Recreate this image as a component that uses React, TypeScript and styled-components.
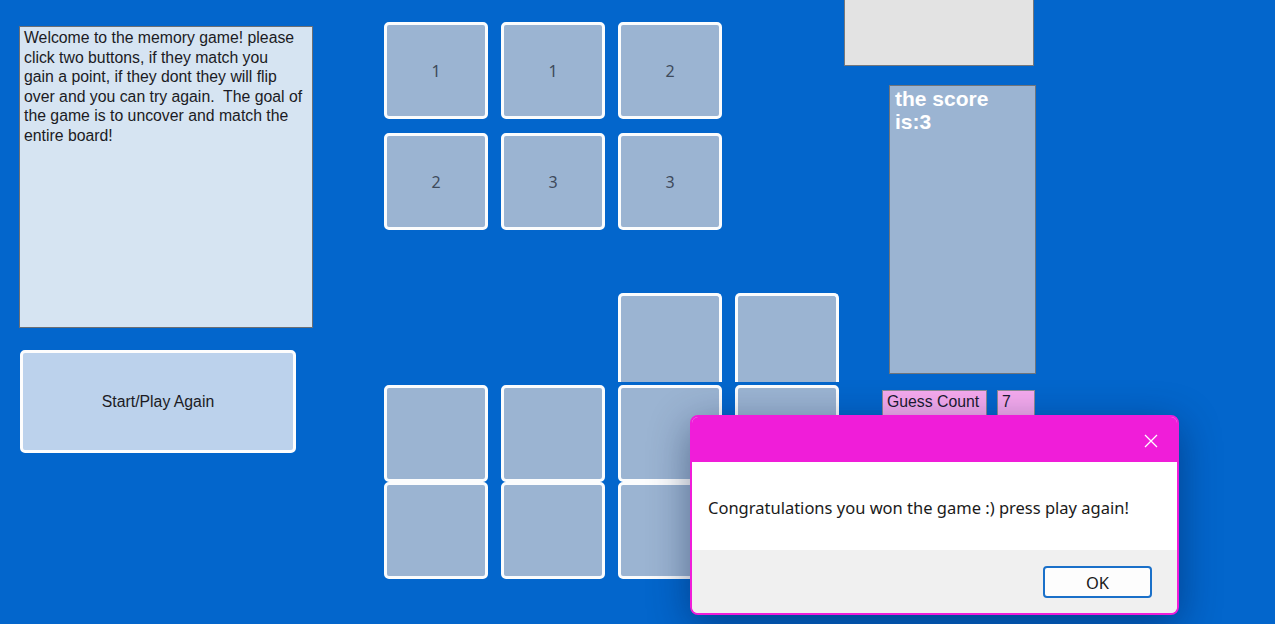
import styled, { createGlobalStyle } from "styled-components";

const GlobalStyle = createGlobalStyle`
  html, body {
    margin: 0;
    padding: 0;
    background: #0366cc;
  }
  * {
    box-sizing: border-box;
  }
`;

const Form = styled.div`
  position: relative;
  display: flex;
  align-items: flex-start;
  width: 1275px;
  height: 624px;
  overflow: hidden;
  background: #0366cc;
  font-family: "Liberation Sans", Arial, sans-serif;
`;

const LeftColumn = styled.div`
  display: flex;
  flex-direction: column;
  align-items: flex-start;
  gap: 22px;
  margin: 26px 0 0 19px;
`;

const InfoBox = styled.div`
  width: 294px;
  height: 302px;
  padding: 1px 4px;
  background: #d6e4f2;
  border: 1px solid #6b6f75;
  color: #1b1b24;
  font-size: 15.8px;
  line-height: 19.5px;
`;

const PlayButton = styled.button`
  width: 276px;
  height: 103px;
  margin-left: 1px;
  background: #bcd2ec;
  border: 3px solid #fdfdfd;
  border-radius: 5px;
  color: #1b1b24;
  font-family: "Liberation Sans", Arial, sans-serif;
  font-size: 15.8px;
  padding: 0;
`;

const Board = styled.div`
  display: flex;
  flex-direction: column;
  gap: 63px;
  width: 455px;
  margin: 22px 0 0 71px;
`;

const TopGrid = styled.div`
  display: grid;
  grid-template-columns: repeat(3, 104px);
  grid-auto-rows: 97px;
  gap: 14px 13px;
`;

const LowerGrid = styled.div`
  display: grid;
  grid-template-columns: repeat(4, 104px);
  grid-template-rows: 92px 97px 97px;
  column-gap: 13px;
  row-gap: 0;

  & > :nth-child(-n + 4) {
    margin-bottom: 3px;
  }
`;

const Tile = styled.div<{ $cut?: boolean; $empty?: boolean }>`
  display: flex;
  align-items: center;
  justify-content: center;
  background: ${(p) => (p.$empty ? "transparent" : "#9bb4d2")};
  border: ${(p) => (p.$empty ? "none" : "3px solid #fbfcfd")};
  border-bottom: ${(p) => (p.$cut || p.$empty ? "none" : "3px solid #fbfcfd")};
  border-radius: ${(p) => (p.$cut ? "5px 5px 0 0" : "5px")};
  color: #3e4a5b;
  font-family: "Noto Sans", "Open Sans", sans-serif;
  font-size: 16px;
`;

const RightPanel = styled.div`
  display: flex;
  flex-direction: column;
  align-items: flex-start;
  margin-left: 5px;
`;

const BlankPanel = styled.div`
  width: 190px;
  height: 66px;
  background: #e3e3e3;
  border: 1px solid #74777c;
  border-top: none;
`;

const ScoreBox = styled.div`
  width: 147px;
  height: 289px;
  margin: 19px 0 0 45px;
  padding: 1px 5px;
  background: #9bb4d2;
  border: 1px solid #6f747b;
  color: #ffffff;
  font-size: 21px;
  font-weight: bold;
  line-height: 23px;
`;

const GuessRow = styled.div`
  display: flex;
  align-items: flex-start;
  gap: 10px;
  margin: 16px 0 0 38px;
`;

const PinkLabel = styled.div<{ $width: number }>`
  width: ${(p) => p.$width}px;
  height: 26px;
  padding: 1px 4px;
  background: #f5aaee;
  border: 1px solid #8a8a94;
  color: #1b1b30;
  font-size: 15.8px;
  line-height: 20px;
`;

const Dialog = styled.div`
  position: absolute;
  left: 690px;
  top: 415px;
  width: 489px;
  height: 200px;
  display: flex;
  flex-direction: column;
  border: 2px solid #f01dd9;
  border-radius: 8px;
  overflow: hidden;
  background: #f0f0f0;
  box-shadow: 0 10px 40px rgba(0, 20, 60, 0.45);
  font-family: "Noto Sans", "Open Sans", sans-serif;
`;

const TitleBar = styled.div`
  display: flex;
  justify-content: flex-end;
  align-items: center;
  height: 45px;
  padding-right: 19px;
  background: #f01dd9;
`;

const CloseIcon = styled.svg`
  width: 14px;
  height: 14px;
  margin-top: 2px;
`;

const MessageArea = styled.div`
  display: flex;
  align-items: center;
  height: 88px;
  padding: 2px 16px 0;
  background: #ffffff;
  color: #1a1a1a;
  font-size: 16.5px;
`;

const Footer = styled.div`
  display: flex;
  justify-content: flex-end;
  align-items: flex-start;
  flex: 1;
  padding: 16px 25px 0 0;
  background: #f0f0f0;
`;

const OkButton = styled.button`
  width: 109px;
  height: 32px;
  padding: 0;
  background: #fdfdfd;
  border: 2px solid #1a70c9;
  border-radius: 4px;
  color: #1a1a1a;
  font-family: "Noto Sans", "Open Sans", sans-serif;
  font-size: 16.5px;
`;

const topTiles = ["1", "1", "2", "2", "3", "3"];

export default function App() {
  return (
    <>
      <GlobalStyle />
      <Form>
        <LeftColumn>
          <InfoBox>
            Welcome to the memory game! please
            <br />
            click two buttons, if they match you
            <br />
            gain a point, if they dont they will flip
            <br />
            over and you can try again.&nbsp; The goal of
            <br />
            the game is to uncover and match the
            <br />
            entire board!
          </InfoBox>
          <PlayButton>Start/Play Again</PlayButton>
        </LeftColumn>

        <Board>
          <TopGrid>
            {topTiles.map((n, i) => (
              <Tile key={i}>{n}</Tile>
            ))}
          </TopGrid>
          <LowerGrid>
            <Tile $empty />
            <Tile $empty />
            <Tile $cut />
            <Tile $cut />
            <Tile />
            <Tile />
            <Tile />
            <Tile />
            <Tile />
            <Tile />
            <Tile />
            <Tile />
          </LowerGrid>
        </Board>

        <RightPanel>
          <BlankPanel />
          <ScoreBox>
            the score
            <br />
            is:3
          </ScoreBox>
          <GuessRow>
            <PinkLabel $width={105}>Guess Count</PinkLabel>
            <PinkLabel $width={38}>7</PinkLabel>
          </GuessRow>
        </RightPanel>

        <Dialog>
          <TitleBar>
            <CloseIcon viewBox="0 0 14 14">
              <path d="M1 1 L13 13 M13 1 L1 13" stroke="#ffffff" strokeWidth="1.3" fill="none" />
            </CloseIcon>
          </TitleBar>
          <MessageArea>Congratulations you won the game :) press play again!</MessageArea>
          <Footer>
            <OkButton>OK</OkButton>
          </Footer>
        </Dialog>
      </Form>
    </>
  );
}
